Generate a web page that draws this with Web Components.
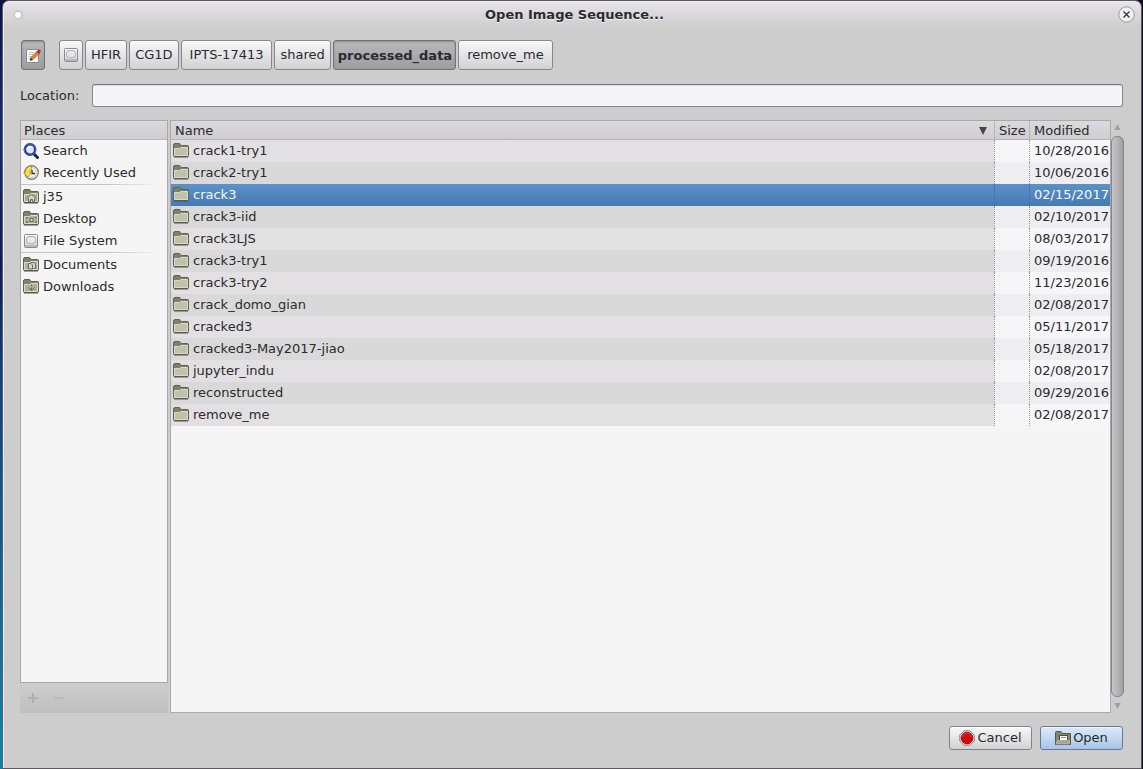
<!DOCTYPE html>
<html lang="en">
<head>
<meta charset="utf-8">
<title>Open Image Sequence...</title>
<style>
html{height:100%}
body{margin:0;min-height:100%;display:flex;flex-direction:column;font:13px/16px "DejaVu Sans",sans-serif;color:#2b2a2e;
background:linear-gradient(90deg,transparent 50%,#0c0d20 50%),linear-gradient(#0c1440,#16296b 15%,#0d1d55 35%,#12457c 50%,#0f5d8a 70%,#12809f 95%)}
</style>
</head>
<body>
<dialog-window heading="Open Image Sequence...">
  <path-bar>
    <path-button pressed slot="toggle" label="Type a file name"><ui-icon name="edit"></ui-icon></path-button>
    <path-button label="File System"><ui-icon name="drive"></ui-icon></path-button>
    <path-button>HFIR</path-button>
    <path-button>CG1D</path-button>
    <path-button wide>IPTS-17413</path-button>
    <path-button>shared</path-button>
    <path-button pressed>processed_data</path-button>
    <path-button wide>remove_me</path-button>
  </path-bar>
  <location-field></location-field>
  <file-panes>
    <places-panel slot="places">
      <place-item icon="search">Search</place-item>
      <place-item icon="recent">Recently Used</place-item>
      <place-divider></place-divider>
      <place-item icon="home">j35</place-item>
      <place-item icon="desktop">Desktop</place-item>
      <place-item icon="drive">File System</place-item>
      <place-divider></place-divider>
      <place-item icon="documents">Documents</place-item>
      <place-item icon="downloads">Downloads</place-item>
    </places-panel>
    <file-table slot="files"></file-table>
    <scroll-bar slot="scroll"></scroll-bar>
  </file-panes>
  <dialog-actions>
    <action-button icon="stop">Cancel</action-button>
    <action-button icon="open" primary>Open</action-button>
  </dialog-actions>
</dialog-window>

<script>
const folder = inner => `<svg width="16" height="16" viewBox="0 0 16 16"><path d="M.5 12.500V2Q.5 .5 2 .5H6Q7 .5 7.500 1.500L8 2.500H14.500Q15.500 2.500 15.500 3.500V12.500Q15.500 13.500 14.500 13.500H1.500Q.5 13.500 .5 12.500Z" fill="#7e8169" stroke="#5f614e"/><path d="M1.500 12.500V5.500H6.500L8 4.500H14.500V12.500Z" fill="${inner ? '#adb098' : '#bfc2ab'}" stroke="#dadccb"/>${inner ? `<g>${inner}</g>` : ''}<path d="M1 14H15" stroke="#55574a"/></svg>`;
const icons = {
  folder: folder(''),
  home: folder('<path d="M3.500 9.500L8.500 5.500L13.500 9.500M5.500 9.500V12.500H7.500V10.500H9.500V12.500H11.500V9.500" fill="#d4d6c6" stroke="#6a6c5c"/>'),
  desktop: folder('<path d="M3.500 7.500V6.500H5M12 6.500H13.500V7.500M3.500 10V11.500H5M12 11.500H13.500V10" fill="none" stroke="#6a6c5c"/><rect x="7" y="7.500" width="3" height="3" fill="#d4d6c6" stroke="#6a6c5c"/>'),
  documents: folder('<path d="M5.500 6.500H8L9.500 8V12H5.500ZM8 5.500H11L12.500 7V11.500H10.500" fill="#d4d6c6" stroke="#6a6c5c"/>'),
  downloads: folder('<path d="M8.500 5.500V7M8.500 8.500V11M5.500 8.500L8.500 11.500L11.500 8.500" fill="none" stroke="#666858"/>'),
  open: '<svg width="16" height="16" viewBox="0 0 16 16"><path d="M.5 14.500V2.500Q.5 1.500 1.500 1.500H6L7.500 3.500H15.500V14.500Z" fill="#83866d" stroke="#55574a"/><rect x="4.500" y="5.500" width="8" height="5" fill="#fff" stroke="#50514c"/><path d="M6 7.500H11" stroke="#8b8d85"/><path d="M1 14L2.500 10.500H14.500V14Z" fill="#a3a58f" stroke="#c3c5b3" stroke-width=".7"/></svg>',
  drive: '<svg width="16" height="16" viewBox="0 0 16 16"><defs><linearGradient id="g" x2="0" y2="1"><stop stop-color="#fbfbfc"/><stop offset="1" stop-color="#cfcfd2"/></linearGradient></defs><rect x="1.500" y="1.500" width="13" height="13" rx="1" fill="url(#g)" stroke="#8a8a8c"/><rect x="3.500" y="3.500" width="9" height="7" rx="2" fill="#dededf" stroke="#b4b4b6"/><path d="M5 8Q6 5 11 5.500Q11 9 7 9.500" fill="none" stroke="#f8f8f8"/><path d="M2 13H14" stroke="#9b9b9e"/></svg>',
  search: '<svg width="16" height="16" viewBox="0 0 16 16"><path d="M10.500 10.500L14.500 14.500" stroke="#222433" stroke-width="3" stroke-linecap="round"/><circle cx="7" cy="6.500" r="5.200" fill="#dfe6f7" stroke="#213a8f" stroke-width="2.500"/><circle cx="7" cy="6.500" r="5.700" fill="none" stroke="#5c7bc8" stroke-width=".7"/><path d="M4.500 6Q5 3.500 8 4" fill="none" stroke="#fff" stroke-width="1.500"/></svg>',
  recent: '<svg width="16" height="16" viewBox="0 0 16 16"><circle cx="8.500" cy="7.500" r="6.800" fill="#f1f0e6" stroke="#77766f" stroke-width="1.200"/><circle cx="8.500" cy="7.500" r="5" fill="none" stroke="#cbc9bc"/><path d="M9 5V8.500H12" fill="none" stroke="#33322d" stroke-width="1.400"/><path d="M.5 7.500H2.500Q2.500 1.500 8.500 1V4.500Q6.500 4.500 6.500 7.500H9L4.500 12Z" fill="#f7e054" stroke="#b8921c" stroke-width=".8"/></svg>',
  edit: '<svg width="16" height="16" viewBox="0 0 16 16"><path d="M1.500 1.500H13.500V14.500H1.500Z" fill="#fbfbfb" stroke="#8c8c8c"/><path d="M3.500 4.500H9M3.500 6.500H8M3.500 8.500H7M3.500 10.500H5" stroke="#c7c7c9"/><path d="M5 12.500L6 9.500L12 3.500L14 5.500L8 11.500Z" fill="#f18b24" stroke="#8b4a18" stroke-width=".8"/><path d="M12 3.500L13.500 2Q15 1.500 15.500 3L14 5.500Z" fill="#d7202b" stroke="#a51d22" stroke-width=".7"/><path d="M5 12.500L6 10L7.500 11.500Z" fill="#292323"/></svg>',
  stop: '<svg width="16" height="16" viewBox="0 0 16 16"><path d="M5 .8H11L15.200 5V11L11 15.200H5L.8 11V5Z" fill="#f2f2f1" stroke="#777" stroke-width=".9"/><circle cx="8" cy="8" r="5.900" fill="#d4060b" stroke="#930508" stroke-width=".8"/><path d="M3.500 7Q5 3 8 3T12.500 7" fill="none" stroke="#ef3a3a"/></svg>'
};

function component(name, markup, setup) {
  const t = document.createElement('template');
  t.innerHTML = markup;
  customElements.define(name, class extends HTMLElement {
    constructor() {
      super();
      this.attachShadow({mode: 'open'}).append(t.content.cloneNode(true));
    }
    connectedCallback() { if (setup) setup(this, this.shadowRoot); }
  });
}

component('ui-icon', `<style>:host{display:block;flex:none;width:16px;height:16px}svg{display:block}</style><span></span>`,
  (el, root) => { root.querySelector('span').innerHTML = icons[el.getAttribute('name')]; });

component('dialog-window', `<style>
:host{display:flex;flex-direction:column;flex:1;margin:0 1px 0 2px;border:1px solid #5d5960;border-radius:7px 7px 0 0;background:linear-gradient(#e8e6ea,#dbd9dc 12px,#cecdce 27px);box-shadow:inset 1px 1px #efedf1}
header{display:flex;align-items:center;height:27px;padding:0 6px 0 10px}
h1{flex:1;margin:0;padding-left:8px;text-align:center;font:bold 13px/16px "DejaVu Sans",sans-serif;text-shadow:0 1px #f3f2f4}
button{padding:0;border:0;background:none}
.menu{width:10px;height:10px;border:2px solid #cbc9cd;border-radius:50%;background:#fff}
.close{width:17px;height:17px}
svg{display:block}
main{display:flex;flex-direction:column;flex:1;padding:12px 18px 18px 17px}
</style><header><button class="menu" aria-label="Window menu"></button><h1></h1><button class="close" aria-label="Close"><svg width="17" height="17" viewBox="0 0 17 17"><circle cx="8.500" cy="8.500" r="7.700" fill="#f1f0f2" stroke="#9a989c"/><path d="M5.500 5.500L11.500 11.500M11.500 5.500L5.500 11.500" stroke="#39383b" stroke-width="1.400"/></svg></button></header><main><slot></slot></main>`,
  (el, root) => { root.querySelector('h1').textContent = el.getAttribute('heading'); });

component('path-bar', `<style>:host{display:flex;gap:14px;padding-left:1px;margin-bottom:14px}nav{display:flex;gap:2px}</style><slot name="toggle"></slot><nav aria-label="Path"><slot></slot></nav>`);

component('path-button', `<style>
:host{display:block}
button{display:flex;align-items:center;justify-content:center;height:30px;padding:0 5px;border:1px solid #87868a;border-radius:3px;background:linear-gradient(#f8f7f9,#e5e4e6 50%,#d1d0d2);box-shadow:inset 0 1px #fff;font:inherit;color:inherit}
:host([wide]) button{padding:0 8px}
:host([pressed]) button{padding:2px 3px 0 4px;border-color:#737276;background:linear-gradient(#b9b8bb,#9d9c9f);box-shadow:inset 0 1px 2px #8b8a8d;font-weight:bold}
:host([label]) button{padding-left:3px;padding-right:3px}
</style><button><slot></slot></button>`,
  (el, root) => {
    const b = root.querySelector('button');
    if (el.hasAttribute('label')) b.setAttribute('aria-label', el.getAttribute('label'));
    if (el.hasAttribute('pressed')) b.setAttribute('aria-pressed', 'true');
  });

component('location-field', `<style>
:host{display:flex;align-items:center;gap:13px;margin-bottom:13px}
input{flex:1;min-width:0;box-sizing:border-box;height:23px;border:1px solid #8a888c;border-top-color:#757477;border-radius:3px;background:#f6f4f8;box-shadow:inset 0 1px #dddbe0;font:inherit;padding:0 4px}
</style><label for="location">Location:</label><input id="location" type="text">`);

component('file-panes', `<style>
:host{display:grid;grid-template-columns:148px 1fr 13px;flex:1;margin:0 -1px 13px 0}
::slotted([slot=files]){margin-left:2px}
</style><slot name="places"></slot><slot name="files"></slot><slot name="scroll"></slot>`);

component('places-panel', `<style>
:host{display:flex;flex-direction:column}
section{flex:1;border:1px solid #a9a8aa;background:#f5f5f5}
h2{box-sizing:border-box;margin:0;height:19px;padding:1px 0 0 3px;border-bottom:1px solid #b7b5b9;background:linear-gradient(#dcdade,#cfcdd0);font:13px/18px "DejaVu Sans",sans-serif}
footer{display:flex;gap:10px;height:30px;padding:0 4px;box-sizing:border-box;background:linear-gradient(#cdcdcd,#c0bfc0);align-items:center}
footer button{width:16px;height:16px;padding:0;border:0;background:none}
svg{display:block}
</style><section><h2>Places</h2><slot></slot></section><footer><button disabled aria-label="Add"><svg width="16" height="16"><path d="M4 8H14M9 3V13" stroke="#afaeb0" stroke-width="2"/></svg></button><button disabled aria-label="Remove"><svg width="16" height="16"><path d="M4 8H14" stroke="#bab9bb" stroke-width="2"/></svg></button></footer>`);

component('place-item', `<style>
:host{display:block}
button{display:flex;align-items:center;gap:4px;width:100%;height:22px;padding:0 2px;border:0;background:none;font:inherit;color:inherit;text-align:left}
</style><button><span></span><slot></slot></button>`,
  (el, root) => { root.querySelector('span').innerHTML = `<ui-icon name="${el.getAttribute('icon')}"></ui-icon>`; });

component('place-divider', `<style>:host{display:block;height:1px;margin-bottom:1px;background:linear-gradient(90deg,#c4c2c6,#c4c2c6 60%,#f5f5f5 95%)}</style>`);

const files = [
  ['crack1-try1', '10/28/2016'], ['crack2-try1', '10/06/2016'], ['crack3', '02/15/2017'], ['crack3-iid', '02/10/2017'],
  ['crack3LJS', '08/03/2017'], ['crack3-try1', '09/19/2016'], ['crack3-try2', '11/23/2016'], ['crack_domo_gian', '02/08/2017'],
  ['cracked3', '05/11/2017'], ['cracked3-May2017-jiao', '05/18/2017'], ['jupyter_indu', '02/08/2017'],
  ['reconstructed', '09/29/2016'], ['remove_me', '02/08/2017']
];
const selected = 'crack3';

component('file-table', `<style>
:host{display:block;border:1px solid #a9a8aa;background:#f5f5f5}
table{width:100%;border-collapse:separate;border-spacing:0;table-layout:fixed}
.size{width:35px}.modified{width:81px}
th{padding:0;height:18px;border-bottom:1px solid #b7b5b9;border-left:1px solid #b7b5b9;background:linear-gradient(#dcdade,#cfcdd0);font-weight:normal}
th:first-child,td:first-child{border-left:0}
th button{display:flex;justify-content:space-between;align-items:center;width:100%;height:18px;padding:2px 0 0 4px;border:0;background:none;font:inherit;color:inherit}
th:first-child button{padding-right:6px}
td{box-sizing:border-box;height:22px;padding:0 0 0 4px;border-left:1px dotted #96959a;background:#f6f5f8;white-space:nowrap}
td:first-child{padding-left:2px;background:#e2e0e3}
tr:nth-child(even) td{background:#eeedef}
tr:nth-child(even) td:first-child{background:#d9d9d9}
tr[aria-selected] td,tr[aria-selected] td:first-child{background:linear-gradient(#5b90c8,#457ab5);border-left-color:#416c9c;color:#f6f9fd}
.entry{display:flex;align-items:center;gap:4px}
</style><table><colgroup><col><col class="size"><col class="modified"></colgroup><thead><tr><th aria-sort="ascending"><button>Name<svg width="10" height="10"><path d="M1 1H9L5 9Z" fill="#454447"/></svg></button></th><th><button>Size</button></th><th><button>Modified</button></th></tr></thead><tbody></tbody></table>`,
  (el, root) => {
    root.querySelector('tbody').innerHTML = files.map(([name, date]) =>
      `<tr${name === selected ? ' aria-selected="true"' : ''}><td><div class="entry"><ui-icon name="folder"></ui-icon>${name}</div></td><td></td><td>${date}</td></tr>`).join('');
  });

component('scroll-bar', `<style>
:host{display:flex;flex-direction:column;align-items:center}
svg{display:block;flex:none}
div{flex:1;align-self:stretch;box-sizing:border-box;border:1px solid #858488;border-radius:6px;background:linear-gradient(90deg,#c5c4c6,#b5b4b6 50%,#9f9ea1)}
</style><svg width="13" height="16"><path d="M3.500 10H9.500L6.500 4Z" fill="#a09fa2"/></svg><div></div><svg width="13" height="16"><path d="M3.500 6H9.500L6.500 12Z" fill="#a09fa2"/></svg>`);

component('dialog-actions', `<style>:host{display:flex;justify-content:flex-end;gap:8px}</style><slot></slot>`);

component('action-button', `<style>
:host{display:block}
button{display:flex;align-items:center;justify-content:center;gap:2px;min-width:83px;height:24px;padding:0 4px;border:1px solid #858388;border-radius:3px;background:linear-gradient(#f8f7f9,#e5e4e6 50%,#d2d1d3);box-shadow:inset 0 1px #fff;font:inherit;color:inherit}
:host([primary]) button{border-color:#68798e;background:linear-gradient(#dbe9f8,#c2d9f2 50%,#a6c5e8);box-shadow:inset 0 1px #edf5fd}
</style><button><span></span><slot></slot></button>`,
  (el, root) => { root.querySelector('span').innerHTML = `<ui-icon name="${el.getAttribute('icon')}"></ui-icon>`; });
</script>
</body>
</html>
